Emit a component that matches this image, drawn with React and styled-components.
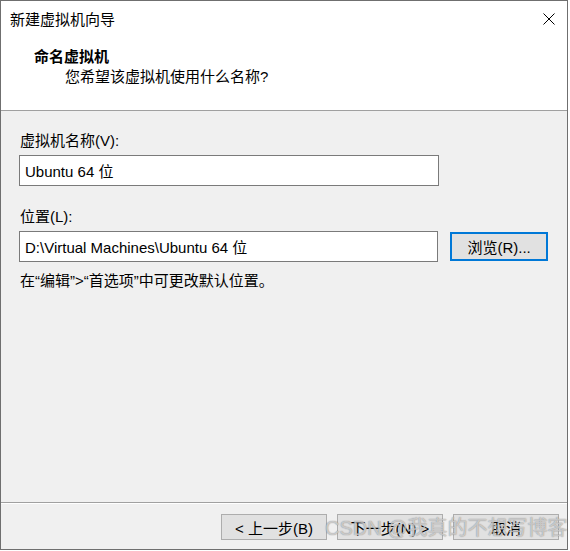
import React from "react";
import styled, { createGlobalStyle } from "styled-components";

const GlobalStyle = createGlobalStyle`
  html, body {
    margin: 0;
    padding: 0;
    background: #ffffff;
  }
  * {
    box-sizing: border-box;
  }
`;

const font = `"Liberation Sans", "Noto Sans CJK SC", sans-serif`;

const Window = styled.div`
  position: relative;
  width: 568px;
  height: 550px;
  display: flex;
  flex-direction: column;
  border: 1px solid #6f6f6f;
  background: #f0f0f0;
  font-family: ${font};
  font-size: 15px;
  color: #000;
`;

const Banner = styled.div`
  height: 110px;
  background: #fff;
  border-bottom: 1px solid #a0a0a0;
  display: flex;
  flex-direction: column;
`;

const TitleBar = styled.div`
  height: 38px;
  display: flex;
  align-items: center;
  justify-content: space-between;
  padding: 0 12px 0 9px;
`;

const Title = styled.span`
  line-height: 20px;
`;

const CloseIcon = styled.svg`
  width: 12px;
  height: 12px;
  margin-top: -2px;
`;

const Header = styled.div`
  padding: 8px 0 0 33px;
`;

const Heading = styled.div`
  font-weight: bold;
  line-height: 20px;
`;

const Subheading = styled.div`
  line-height: 20px;
  padding-left: 31px;
`;

const Body = styled.div`
  flex: 1;
  padding: 20px 19px 0 18px;
  display: flex;
  flex-direction: column;
`;

const Label = styled.div`
  line-height: 20px;
  padding-left: 1px;
  margin-top: ${(p) => p.$gap || 0}px;
  margin-bottom: 4px;
`;

const Row = styled.div`
  display: flex;
  align-items: center;
  gap: 12px;
`;

const TextBox = styled.div`
  width: 420px;
  height: 31px;
  display: flex;
  align-items: center;
  padding: 0 5px;
  background: #fff;
  border: 1px solid #7a7a7a;
  white-space: nowrap;
`;

const Button = styled.button`
  width: ${(p) => p.$w || 106}px;
  height: ${(p) => p.$h || 26}px;
  padding: 0;
  font-family: ${font};
  font-size: 15px;
  color: #000;
  background: #e1e1e1;
  border: ${(p) => (p.$focus ? "2px solid #0078d7" : "1px solid #adadad")};
  display: flex;
  align-items: center;
  justify-content: center;
`;

const Hint = styled.div`
  line-height: 20px;
  padding-left: 1px;
  margin-top: 9px;
`;

const Footer = styled.div`
  border-top: 1px solid #a0a0a0;
  box-shadow: inset 0 1px 0 #ffffff;
  padding: 11px 8px 9px 0;
  display: flex;
  justify-content: flex-end;
  gap: 10px;
`;

const Watermark = styled.div`
  position: absolute;
  left: 324px;
  top: 514px;
  font-family: ${font};
  font-size: 20px;
  line-height: 26px;
  white-space: nowrap;
  color: rgba(255, 255, 255, 0.55);
  text-shadow: 0 0 1px rgba(100, 100, 100, 0.65), 0 0 1px rgba(100, 100, 100, 0.35);
  pointer-events: none;
`;

export default function App() {
  return (
    <>
      <GlobalStyle />
      <Window>
        <Banner>
          <TitleBar>
            <Title>新建虚拟机向导</Title>
            <CloseIcon viewBox="0 0 12 12">
              <path d="M0.5 0.5 L11.5 11.5 M11.5 0.5 L0.5 11.5" stroke="#000" strokeWidth="1" fill="none" />
            </CloseIcon>
          </TitleBar>
          <Header>
            <Heading>命名虚拟机</Heading>
            <Subheading>您希望该虚拟机使用什么名称?</Subheading>
          </Header>
        </Banner>
        <Body>
          <Label>虚拟机名称(V):</Label>
          <TextBox>Ubuntu 64 位</TextBox>
          <Label $gap={21}>位置(L):</Label>
          <Row>
            <TextBox>D:\Virtual Machines\Ubuntu 64 位</TextBox>
            <Button $w={98} $h={29} $focus>浏览(R)...</Button>
          </Row>
          <Hint>在“编辑”&gt;“首选项”中可更改默认位置。</Hint>
        </Body>
        <Footer>
          <Button>&lt; 上一步(B)</Button>
          <Button>下一步(N) &gt;</Button>
          <Button>取消</Button>
        </Footer>
        <Watermark>CSDN @我真的不想写博客</Watermark>
      </Window>
    </>
  );
}
